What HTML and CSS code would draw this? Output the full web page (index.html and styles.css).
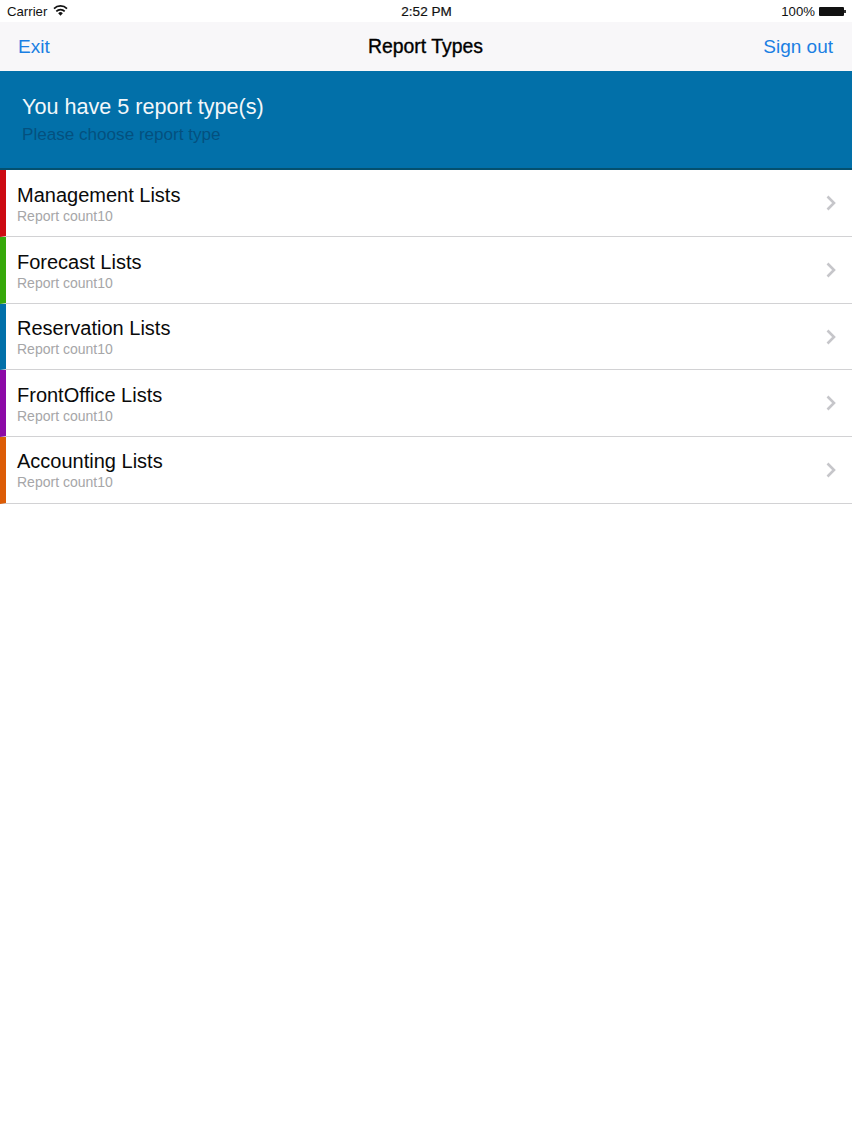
FILE: index.html
```html
<!DOCTYPE html>
<html lang="en">
<head>
<meta charset="utf-8">
<title>Report Types</title>
<link rel="stylesheet" href="styles.css">
</head>
<body>
<header class="status">
  <div class="status-left">
    <span>Carrier</span>
    <svg class="wifi" width="15" height="11" viewBox="0 0 15 11"><path d="M7.500 10.800 5.200 8.300a3.200 3.200 0 0 1 4.600 0Z" fill="#111"/><path d="M3.300 6.300a5.900 5.900 0 0 1 8.400 0M1 3.600a9.200 9.200 0 0 1 13 0" fill="none" stroke="#111" stroke-width="1.700"/></svg>
  </div>
  <div class="status-time">2:52 PM</div>
  <div class="status-right">
    <span>100%</span>
    <span class="battery"><span class="battery-cap"></span></span>
  </div>
</header>
<nav class="nav">
  <span class="nav-link">Exit</span>
  <span class="nav-title">Report Types</span>
  <span class="nav-link nav-link-end">Sign out</span>
</nav>
<section class="banner">
  <div class="banner-title">You have 5 report type(s)</div>
  <div class="banner-sub">Please choose report type</div>
</section>
<ul class="list">
  <li class="row red"><div class="row-text"><div class="row-title">Management Lists</div><div class="row-sub">Report count10</div></div><svg class="chev" width="10" height="16" viewBox="0 0 10 16"><path d="M1.500 1.500 8 8l-6.500 6.500" fill="none" stroke="#c6c6ca" stroke-width="2.600"/></svg></li>
  <li class="row green"><div class="row-text"><div class="row-title">Forecast Lists</div><div class="row-sub">Report count10</div></div><svg class="chev" width="10" height="16" viewBox="0 0 10 16"><path d="M1.500 1.500 8 8l-6.500 6.500" fill="none" stroke="#c6c6ca" stroke-width="2.600"/></svg></li>
  <li class="row blue"><div class="row-text"><div class="row-title">Reservation Lists</div><div class="row-sub">Report count10</div></div><svg class="chev" width="10" height="16" viewBox="0 0 10 16"><path d="M1.500 1.500 8 8l-6.500 6.500" fill="none" stroke="#c6c6ca" stroke-width="2.600"/></svg></li>
  <li class="row purple"><div class="row-text"><div class="row-title">FrontOffice Lists</div><div class="row-sub">Report count10</div></div><svg class="chev" width="10" height="16" viewBox="0 0 10 16"><path d="M1.500 1.500 8 8l-6.500 6.500" fill="none" stroke="#c6c6ca" stroke-width="2.600"/></svg></li>
  <li class="row orange"><div class="row-text"><div class="row-title">Accounting Lists</div><div class="row-sub">Report count10</div></div><svg class="chev" width="10" height="16" viewBox="0 0 10 16"><path d="M1.500 1.500 8 8l-6.500 6.500" fill="none" stroke="#c6c6ca" stroke-width="2.600"/></svg></li>
</ul>
</body>
</html>
```
FILE: styles.css
```css
* { box-sizing: border-box; }
html, body { margin: 0; padding: 0; }
body {
  width: 852px;
  height: 1136px;
  overflow: hidden;
  background: #fff;
  color: #000;
  font-family: "Liberation Sans", Arial, sans-serif;
}
.status {
  height: 22px;
  padding: 0 6px 0 7px;
  display: grid;
  grid-template-columns: 1fr auto 1fr;
  align-items: center;
  font-size: 13.2px;
  color: #111;
  background: #fff;
}
.status-left { display: flex; align-items: center; gap: 6px; }
.wifi { margin-top: -1px; }
.status-time { font-size: 13.5px; -webkit-text-stroke: 0.2px #111; }
.status-right { display: flex; justify-content: flex-end; align-items: center; gap: 4px; }
.battery {
  position: relative;
  width: 25px;
  height: 9px;
  background: #111;
  border-radius: 1px;
  margin-right: 2px;
  margin-top: 1px;
}
.battery-cap {
  position: absolute;
  right: -2px;
  top: 3px;
  width: 2px;
  height: 3px;
  background: #333;
}
.nav {
  height: 49px;
  padding: 0 19px 0 18px;
  display: grid;
  grid-template-columns: 1fr auto 1fr;
  align-items: center;
  background: #f8f7f9;
}
.nav-link { font-size: 19px; color: #1b7fe3; }
.nav-link-end { text-align: right; }
.nav-title { font-size: 19.4px; -webkit-text-stroke: 0.35px #000; }
.banner {
  height: 99px;
  padding: 23px 22px 0;
  background: #0270a9;
  border-bottom: 2px solid #04506f;
}
.banner-title { font-size: 21.6px; line-height: 26px; color: #f2f7fa; }
.banner-sub { font-size: 17.1px; line-height: 20px; margin-top: 5px; color: #04507f; }
.list { list-style: none; margin: 0; padding: 0; }
.row {
  height: 66.6px;
  padding: 0 14px 0 11px;
  display: flex;
  align-items: center;
  justify-content: space-between;
  background: #fff;
  border-bottom: 1.5px solid #d2d2d4;
  border-left: 6px solid #000;
}
.row:first-child { height: 67.3px; }
.red { border-left-color: #cc0a12; }
.green { border-left-color: #36a80a; }
.blue { border-left-color: #0270a9; }
.purple { border-left-color: #8c0aa6; }
.orange { border-left-color: #dc5c06; }
.row-title { font-size: 20px; line-height: 24px; color: #0a0a0a; }
.row-sub { font-size: 14px; line-height: 16px; margin-top: 1px; color: #a6a6a8; }
.chev { margin-right: 2px; }
```
